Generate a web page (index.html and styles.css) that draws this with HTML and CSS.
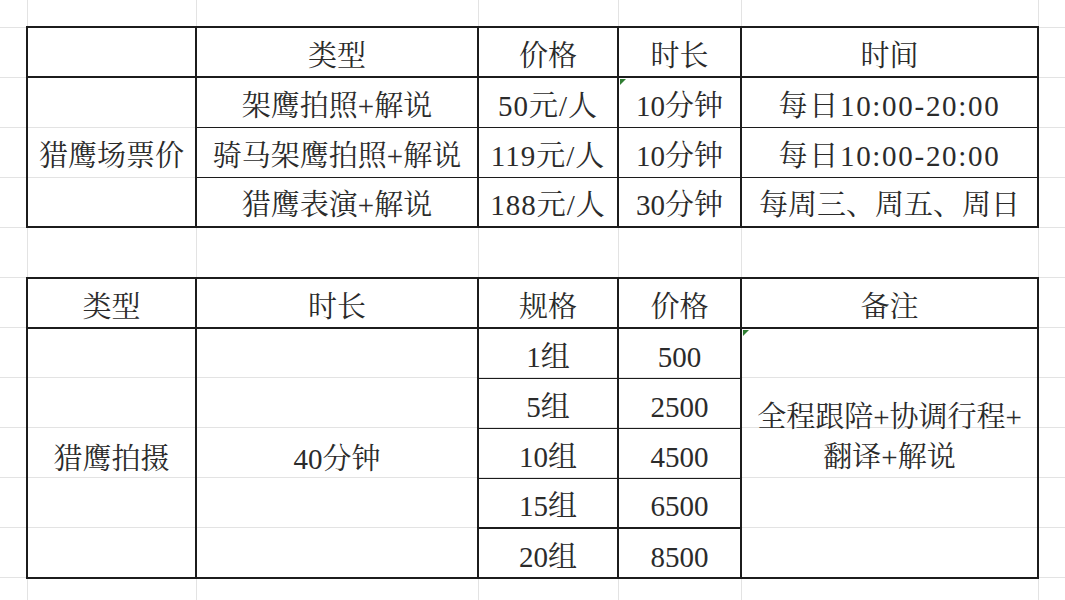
FILE: index.html
```html
<!DOCTYPE html>
<html lang="zh-CN">
<head>
<meta charset="utf-8">
<title>猎鹰场票价</title>
<link rel="stylesheet" href="styles.css">
</head>
<body>
<div class="sheet">
  <table class="tbl t1">
    <colgroup>
      <col class="ca"><col class="cb"><col class="cc"><col class="cd"><col class="ce">
    </colgroup>
    <tr class="head">
      <td class="ca-cell"></td>
      <td class="cb-cell">类型</td>
      <td class="cc-cell">价格</td>
      <td class="cd-cell">时长</td>
      <td class="ce-cell">时间</td>
    </tr>
    <tr>
      <td class="ca-cell" rowspan="3">猎鹰场票价</td>
      <td class="cb-cell">架鹰拍照+解说</td>
      <td class="cc-cell price">50元/人</td>
      <td class="cd-cell mark">10分钟</td>
      <td class="ce-cell time">每日10:00-20:00</td>
    </tr>
    <tr>
      <td class="cb-cell">骑马架鹰拍照+解说</td>
      <td class="cc-cell price">119元/人</td>
      <td class="cd-cell">10分钟</td>
      <td class="ce-cell time">每日10:00-20:00</td>
    </tr>
    <tr>
      <td class="cb-cell">猎鹰表演+解说</td>
      <td class="cc-cell price">188元/人</td>
      <td class="cd-cell">30分钟</td>
      <td class="ce-cell">每周三、周五、周日</td>
    </tr>
  </table>

  <table class="tbl t2">
    <colgroup>
      <col class="ca"><col class="cb"><col class="cc"><col class="cd"><col class="ce">
    </colgroup>
    <tr class="head">
      <td>类型</td>
      <td>时长</td>
      <td>规格</td>
      <td>价格</td>
      <td>备注</td>
    </tr>
    <tr>
      <td rowspan="5" class="low">猎鹰拍摄</td>
      <td rowspan="5" class="low">40分钟</td>
      <td>1组</td>
      <td>500</td>
      <td rowspan="5" class="note mark">全程跟陪+协调行程+<br>翻译+解说</td>
    </tr>
    <tr><td>5组</td><td>2500</td></tr>
    <tr><td>10组</td><td>4500</td></tr>
    <tr><td>15组</td><td>6500</td></tr>
    <tr class="last"><td>20组</td><td>8500</td></tr>
  </table>
</div>
</body>
</html>
```

FILE: styles.css
```css
html, body {
  margin: 0;
  padding: 0;
}

body {
  width: 1065px;
  height: 600px;
  overflow: hidden;
  background-color: #ffffff;
  background-image:
    linear-gradient(#e3e3e3, #e3e3e3),
    linear-gradient(#e3e3e3, #e3e3e3),
    linear-gradient(#e3e3e3, #e3e3e3),
    linear-gradient(#e3e3e3, #e3e3e3),
    linear-gradient(#e3e3e3, #e3e3e3),
    linear-gradient(#e3e3e3, #e3e3e3),
    linear-gradient(to bottom, #e3e3e3 0, #e3e3e3 1px, transparent 1px);
  background-size:
    1px 100%, 1px 100%, 1px 100%, 1px 100%, 1px 100%, 1px 100%,
    100% 50px;
  background-position:
    27px 0, 196px 0, 478px 0, 618px 0, 741px 0, 1038px 0,
    0 27px;
  background-repeat:
    no-repeat, no-repeat, no-repeat, no-repeat, no-repeat, no-repeat,
    repeat-y;
  font-family: "Liberation Serif", "Noto Serif CJK SC", "Noto Sans CJK SC", serif;
  color: #2b2b2b;
}

.sheet {
  padding: 26px 0 0 26px;
}

.tbl {
  border-collapse: collapse;
  table-layout: fixed;
  width: 1011px;
  font-size: 29px;
  border: 2px solid #1c1c1c;
}

.ca { width: 169px; }
.cb { width: 282px; }
.cc { width: 140px; }
.cd { width: 123px; }
.ce { width: 297px; }

.tbl tr {
  height: 50px;
}

.tbl td {
  padding: 7px 0 0 0;
  text-align: center;
  vertical-align: middle;
  white-space: nowrap;
  line-height: 40px;
  border: 1px solid #1c1c1c;
  border-left-width: 2px;
  border-right-width: 2px;
  position: relative;
}

.tbl tr.head td {
  border-bottom-width: 2px;
}

.t1 td.cc-cell {
  border-left: 2px solid #4a4a4a;
}

.price {
  letter-spacing: 1px;
}

.time {
  letter-spacing: 1.7px;
}

.t2 {
  margin-top: 49px;
}

.t2 tr.last td {
  border-top-width: 2px;
}

.t2 td.low {
  padding: 12px 0 0 0;
}

.t2 td.note {
  padding: 0 0 32px 0;
}

.mark::before {
  content: "";
  position: absolute;
  left: 1px;
  top: 1px;
  width: 0;
  height: 0;
  border-top: 6px solid #2f7d32;
  border-right: 6px solid transparent;
}
```
